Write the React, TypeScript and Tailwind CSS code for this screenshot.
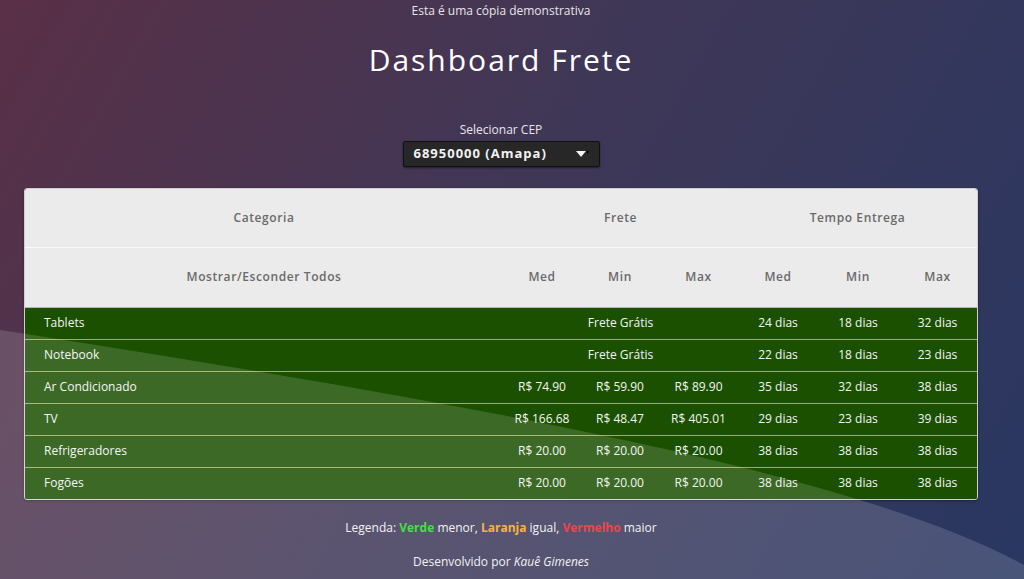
import React from "react";

type Row = {
  name: string;
  frete: [string, string, string] | "gratis";
  tempo: [string, string, string];
};

const rows: Row[] = [
  { name: "Tablets", frete: "gratis", tempo: ["24 dias", "18 dias", "32 dias"] },
  { name: "Notebook", frete: "gratis", tempo: ["22 dias", "18 dias", "23 dias"] },
  { name: "Ar Condicionado", frete: ["R$ 74.90", "R$ 59.90", "R$ 89.90"], tempo: ["35 dias", "32 dias", "38 dias"] },
  { name: "TV", frete: ["R$ 166.68", "R$ 48.47", "R$ 405.01"], tempo: ["29 dias", "23 dias", "39 dias"] },
  { name: "Refrigeradores", frete: ["R$ 20.00", "R$ 20.00", "R$ 20.00"], tempo: ["38 dias", "38 dias", "38 dias"] },
  { name: "Fogões", frete: ["R$ 20.00", "R$ 20.00", "R$ 20.00"], tempo: ["38 dias", "38 dias", "38 dias"] },
];

export default function App() {
  return (
    <div
      className="relative h-[579px] w-full overflow-hidden bg-[linear-gradient(120deg,#5a3047_0%,#403756_45%,#293762_100%)] text-white"
      style={{ fontFamily: '"Open Sans", "Noto Sans", sans-serif' }}
    >
      <div className="flex w-[1002px] flex-col items-center">
        <p className="pt-[3px] text-[12px] leading-[16px] text-[#e6e6e6]">Esta é uma cópia demonstrativa</p>
        <h1 className="mt-[23px] text-[30px] font-medium leading-[36px] tracking-[2px] text-white">Dashboard Frete</h1>
        <p className="mt-[44px] text-[12px] leading-[16px] text-[#e6e6e6]">Selecionar CEP</p>
        <div className="mt-[3px] flex h-[26px] w-[197px] items-center justify-between rounded-[2px] border border-[#111] bg-[#272727] pl-[10px] pr-[9px] shadow-[0_1px_2px_rgba(0,0,0,0.5)]">
          <span className="text-[13px] font-bold tracking-[1px] text-[#f2f2f2]">68950000 (Amapa)</span>
          <svg width="14" height="8" viewBox="0 0 14 8">
            <polygon points="0,1 10,1 5,7" fill="#f5f5f5" />
            <polygon points="10,1 13,1 11.5,4" fill="#000" />
          </svg>
        </div>

        <div className="mt-[21px] w-[954px] overflow-hidden rounded-[3px] border border-[#d0d0d0] shadow-[0_1px_3px_rgba(0,0,0,0.35)]">
          <table className="w-full table-fixed border-collapse text-[12px]">
            <colgroup>
              <col className="w-[478px]" />
              <col className="w-[78px]" />
              <col className="w-[78px]" />
              <col className="w-[79px]" />
              <col className="w-[80px]" />
              <col className="w-[80px]" />
              <col className="w-[79px]" />
            </colgroup>
            <thead className="bg-[#ebebeb] text-[12px] tracking-[0.6px] text-[#6a6a6a]">
              <tr className="h-[58px] border-b border-[#fafafa]">
                <th className="font-semibold">Categoria</th>
                <th colSpan={3} className="font-semibold">Frete</th>
                <th colSpan={3} className="font-semibold">Tempo Entrega</th>
              </tr>
              <tr className="h-[60px] border-b border-[#b5b5b5]">
                <th className="font-semibold">Mostrar/Esconder Todos</th>
                <th className="font-semibold">Med</th>
                <th className="font-semibold">Min</th>
                <th className="font-semibold">Max</th>
                <th className="font-semibold">Med</th>
                <th className="font-semibold">Min</th>
                <th className="font-semibold">Max</th>
              </tr>
            </thead>
            <tbody className="bg-[#1a5000] text-[#f4f4f4]">
              {rows.map((r, i) => (
                <tr key={r.name} className={`h-[32px] ${i > 0 ? "border-t border-[#9aa592]" : ""}`}>
                  <td className="pl-[19px] text-left">{r.name}</td>
                  {r.frete === "gratis" ? (
                    <td colSpan={3} className="text-center">Frete Grátis</td>
                  ) : (
                    r.frete.map((v, j) => (
                      <td key={j} className="text-center">{v}</td>
                    ))
                  )}
                  {r.tempo.map((v, j) => (
                    <td key={j} className="text-center">{v}</td>
                  ))}
                </tr>
              ))}
            </tbody>
          </table>
        </div>

        <p className="mt-[20px] text-[12px] leading-[16px] text-[#f0f0f0]">
          Legenda: <b className="text-[#22dd22]">Verde</b> menor, <b className="text-[#f5a623]">Laranja</b> igual,{" "}
          <b className="text-[#e8262b]">Vermelho</b> maior
        </p>
        <p className="mt-[18px] text-[12px] leading-[16px] text-[#f0f0f0]">
          Desenvolvido por <i>Kauê Gimenes</i>
        </p>
      </div>

      <svg
        className="pointer-events-none absolute inset-0"
        width="1024"
        height="579"
        viewBox="0 0 1024 579"
        preserveAspectRatio="none"
      >
        <path d="M0,330 C450,400 850,470 1024,565 L1024,579 L0,579 Z" fill="rgba(255,255,255,0.15)" />
      </svg>
    </div>
  );
}
